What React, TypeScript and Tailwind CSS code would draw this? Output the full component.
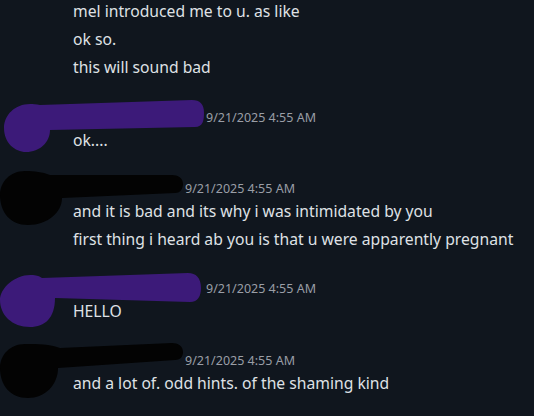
import React from 'react'

const font = { fontFamily: '"Noto Sans", "Open Sans", sans-serif' }

const scribbles: Record<string, { color: string; d: string; top: number }> = {
  purpleA: {
    color: '#3c1a79',
    top: 108,
    d: 'M 30 104 C 15 104, 4 115, 4 128 C 4 143, 15 152, 26 152 C 40 152, 50 142, 50 130 L 195 127 C 203 127, 204 120, 204 113 C 204 104, 200 100, 192 100 L 40 105 C 36 104, 33 104, 30 104 Z',
  },
  blackA: {
    color: '#030303',
    top: 179,
    d: 'M 25 171 C 10 171, 0 182, 0 195 C 0 212, 10 225, 28 225 C 48 225, 62 212, 62 198 L 175 193 C 181 193, 183 188, 183 184 C 183 178, 178 175, 172 175 L 50 175 C 42 172, 35 171, 25 171 Z',
  },
  purpleB: {
    color: '#3c1a79',
    top: 279,
    d: 'M 30 275 C 15 275, 0 288, 0 300 C 0 315, 12 327, 30 327 C 45 327, 55 318, 55 298 L 190 302 C 198 302, 201 296, 201 288 C 201 278, 196 273, 188 273 L 42 278 C 38 275, 34 275, 30 275 Z',
  },
  blackB: {
    color: '#030303',
    top: 351,
    d: 'M 25 344 C 10 344, 0 355, 0 368 C 0 385, 10 398, 28 398 C 45 398, 58 385, 58 368 L 175 360 C 181 360, 183 356, 183 352 C 183 346, 178 343, 172 343 L 60 348 C 50 344, 38 344, 25 344 Z',
  },
}

const Line = ({ text }: { text: string }) => (
  <div className="h-[28px] pt-[2px] pl-[73px] flex items-center text-[15.7px] text-[#dfe1e5] whitespace-nowrap">
    {text}
  </div>
)

const Group = ({ who, nameWidth, lines, mt }: any) => {
  const s = scribbles[who]
  return (
    <div className="relative" style={{ marginTop: mt }}>
      <div className="h-[18px] pt-[2px] pl-[73px] flex items-center">
        <span className="inline-block" style={{ width: nameWidth }} />
        <span className="text-[12.5px] text-[#9a9ea6]">9/21/2025 4:55 AM</span>
      </div>
      {lines.map((l: string, i: number) => (
        <Line key={i} text={l} />
      ))}
      {/* redaction scribble over avatar + name */}
      <svg className="absolute left-0 top-0 overflow-visible" width="210" height="60">
        <g transform={`translate(0,-${s.top})`}>
          <path d={s.d} fill={s.color} />
        </g>
      </svg>
    </div>
  )
}

export default function App() {
  return (
    <div className="w-[534px] h-[416px] overflow-hidden bg-[#10161e]" style={font}>
      <div className="-mt-[3px]">
        <Line text="mel introduced me to u. as like" />
        <Line text="ok so." />
        <Line text="this will sound bad" />
      </div>

      <Group who="purpleA" nameWidth={133} mt={27} lines={['ok....']} />
      <Group
        who="blackA"
        nameWidth={112}
        mt={25}
        lines={[
          'and it is bad and its why i was intimidated by you',
          'first thing i heard ab you is that u were apparently pregnant',
        ]}
      />
      <Group who="purpleB" nameWidth={133} mt={26} lines={['HELLO']} />
      <Group who="blackB" nameWidth={112} mt={26} lines={['and a lot of. odd hints. of the shaming kind']} />
    </div>
  )
}
